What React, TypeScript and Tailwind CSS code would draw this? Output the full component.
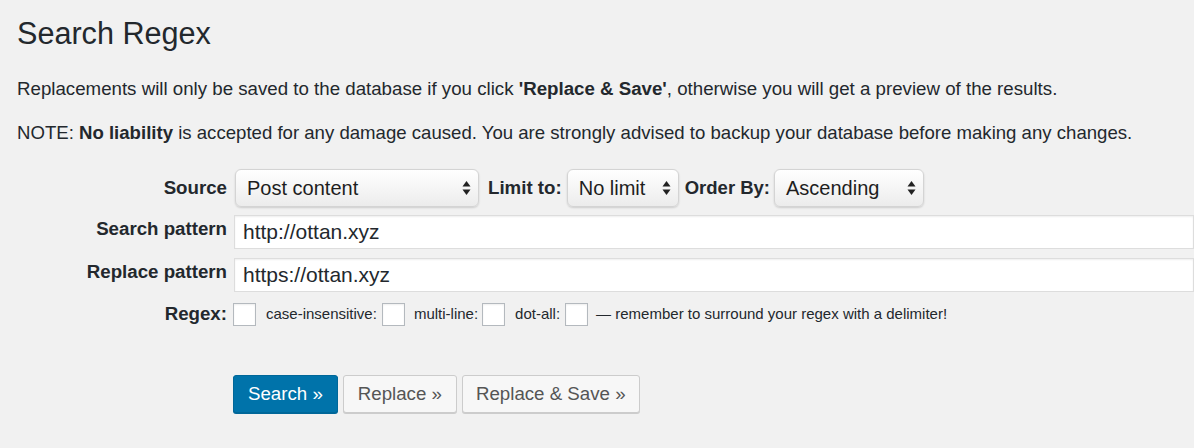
import { ReactNode } from "react";

function Select({ value, width }: { value: string; width: string }) {
  return (
    <div
      className={`flex h-[38px] ${width} items-center justify-between rounded-[6px] border border-[#d4d4d4] bg-gradient-to-b from-white to-[#ececec] pl-[11px] pr-[7px] text-[20px] text-[#1e1e1e] shadow-[0_1px_2px_rgba(0,0,0,0.15)]`}
    >
      <span>{value}</span>
      <svg width="9" height="16" viewBox="0 0 9 16" aria-hidden>
        <path d="M4.5 1 L8.5 6.5 H0.5 Z" fill="#222" />
        <path d="M4.5 15 L8.5 9.5 H0.5 Z" fill="#222" />
      </svg>
    </div>
  );
}

function Row({ label, children, className = "" }: { label: string; children: ReactNode; className?: string }) {
  return (
    <div className={`flex ${className}`}>
      <div className="w-[227px] shrink-0 text-right text-[18.7px] font-bold">{label}</div>
      <div className="flex min-w-0 flex-1 items-center">{children}</div>
    </div>
  );
}

function Box() {
  return <span className="inline-block h-[23px] w-[23px] shrink-0 border border-[#b4b9be] bg-white shadow-[inset_0_1px_2px_rgba(0,0,0,0.07)]" />;
}

export default function App() {
  return (
    <div className="h-[448px] w-[1194px] overflow-hidden bg-[#f1f1f1] text-[#23282d] [font-family:'Liberation_Sans',Arial,sans-serif]">
      <h1 className="pl-[17px] pt-[14px] text-[30.6px] leading-[38px]">Search Regex</h1>

      <p className="mt-[25px] pl-[17px] text-[18.7px] leading-[24px]">
        Replacements will only be saved to the database if you click <b>'Replace &amp; Save'</b>, otherwise you will get a preview of the results.
      </p>
      <p className="mt-[20px] pl-[17px] text-[18.6px] leading-[24px]">
        NOTE: <b>No liability</b> is accepted for any damage caused. You are strongly advised to backup your database before making any changes.
      </p>

      <div className="mt-[24px] flex flex-col">
        <Row label="Source" className="h-[38px] items-center">
          <div className="ml-[8px] flex items-center">
            <Select value="Post content" width="w-[244px]" />
            <span className="ml-[9px] mr-[5px] text-[18.7px] font-bold">Limit to:</span>
            <Select value="No limit" width="w-[112px]" />
            <span className="ml-[6px] mr-[4px] text-[18.5px] font-bold">Order By:</span>
            <Select value="Ascending" width="w-[150px]" />
          </div>
        </Row>

        <Row label="Search pattern" className="mt-[8px] h-[34px]">
          <div className="ml-[7px] flex h-[34px] flex-1 items-center border border-[#dddddd] bg-white pl-[8px] text-[21px] shadow-[inset_0_1px_2px_rgba(0,0,0,0.07)]">
            http://ottan.xyz
          </div>
        </Row>

        <Row label="Replace pattern" className="mt-[9px] h-[34px]">
          <div className="ml-[7px] flex h-[34px] flex-1 items-center border border-[#dddddd] bg-white pl-[8px] text-[21px] shadow-[inset_0_1px_2px_rgba(0,0,0,0.07)]">
            https://ottan.xyz
          </div>
        </Row>

        <Row label="Regex:" className="mt-[11px] h-[23px] items-center">
          <div className="ml-[6px] flex items-center text-[15px]">
            <Box />
            <span className="ml-[10px] mr-[5px]">case-insensitive:</span>
            <Box />
            <span className="ml-[9px] mr-[4px]">multi-line:</span>
            <Box />
            <span className="ml-[10px] mr-[5px]">dot-all:</span>
            <Box />
            <span className="ml-[8px]">— remember to surround your regex with a delimiter!</span>
          </div>
        </Row>
      </div>

      <div className="ml-[233px] mt-[49px] flex gap-[5px] text-[18.7px]">
        <button className="h-[38px] rounded-[3px] border border-[#006799] bg-[#0073aa] px-[14px] text-white shadow-[0_1px_0_#006799]">
          Search »
        </button>
        <button className="h-[38px] rounded-[3px] border border-[#cccccc] bg-[#f7f7f7] px-[14px] text-[#555] shadow-[0_1px_0_#cccccc]">
          Replace »
        </button>
        <button className="h-[38px] rounded-[3px] border border-[#cccccc] bg-[#f7f7f7] px-[13px] text-[#555] shadow-[0_1px_0_#cccccc]">
          Replace &amp; Save »
        </button>
      </div>
    </div>
  );
}
